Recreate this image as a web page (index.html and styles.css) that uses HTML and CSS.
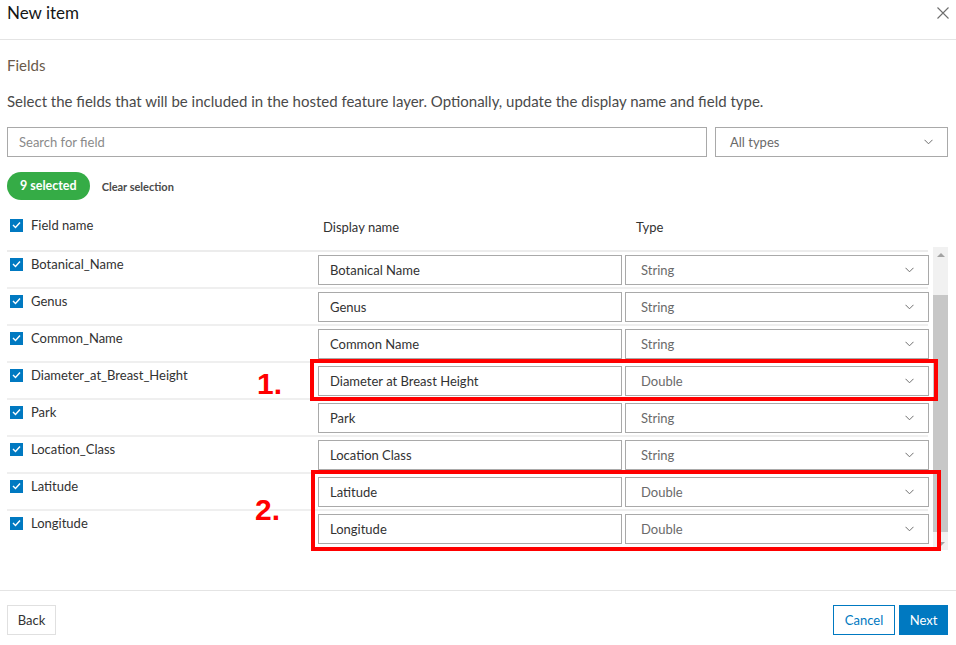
FILE: index.html
```html
<!DOCTYPE html>
<html lang="en">
<head>
<meta charset="utf-8">
<title>New item</title>
<link rel="stylesheet" href="styles.css">
</head>
<body>
<div class="dialog">
  <header class="dlg-header">
    <h1 class="dlg-title">New item</h1>
    <svg class="close" width="12" height="12" viewBox="0 0 12 12"><path d="M0.5 0.5L11.5 11.5M11.5 0.5L0.5 11.5" stroke="#6e6e6e" stroke-width="1.1" fill="none"/></svg>
  </header>
  <main class="dlg-body">
    <div class="section-label">Fields</div>
    <p class="intro">Select the fields that will be included in the hosted feature layer. Optionally, update the display name and field type.</p>
    <div class="filters">
      <div class="search">Search for field</div>
      <div class="select type-filter"><span>All types</span><svg class="chev" width="9" height="6" viewBox="0 0 9 6"><path d="M0.5 0.8L4.5 4.8L8.5 0.8" stroke="#6e6e6e" fill="none"/></svg></div>
    </div>
    <div class="selection">
      <span class="pill">9 selected</span>
      <span class="clear">Clear selection</span>
    </div>
    <div class="table-head">
      <div class="th th-field"><span class="cb"><svg width="9" height="8" viewBox="0 0 9 8"><path d="M1 4L3.5 6.5L8 1.5" stroke="#fff" stroke-width="1.4" fill="none"/></svg></span>Field name</div>
      <div class="th th-display">Display name</div>
      <div class="th th-type">Type</div>
    </div>
    <div class="table-wrap">
      <div class="rows">
        <div class="row"><div class="fname"><span class="cb"><svg width="9" height="8" viewBox="0 0 9 8"><path d="M1 4L3.5 6.5L8 1.5" stroke="#fff" stroke-width="1.4" fill="none"/></svg></span>Botanical_Name</div><div class="input">Botanical Name</div><div class="select"><span>String</span><svg class="chev" width="9" height="6" viewBox="0 0 9 6"><path d="M0.5 0.8L4.5 4.8L8.5 0.8" stroke="#6e6e6e" fill="none"/></svg></div></div>
        <div class="row"><div class="fname"><span class="cb"><svg width="9" height="8" viewBox="0 0 9 8"><path d="M1 4L3.5 6.5L8 1.5" stroke="#fff" stroke-width="1.4" fill="none"/></svg></span>Genus</div><div class="input">Genus</div><div class="select"><span>String</span><svg class="chev" width="9" height="6" viewBox="0 0 9 6"><path d="M0.5 0.8L4.5 4.8L8.5 0.8" stroke="#6e6e6e" fill="none"/></svg></div></div>
        <div class="row"><div class="fname"><span class="cb"><svg width="9" height="8" viewBox="0 0 9 8"><path d="M1 4L3.5 6.5L8 1.5" stroke="#fff" stroke-width="1.4" fill="none"/></svg></span>Common_Name</div><div class="input">Common Name</div><div class="select"><span>String</span><svg class="chev" width="9" height="6" viewBox="0 0 9 6"><path d="M0.5 0.8L4.5 4.8L8.5 0.8" stroke="#6e6e6e" fill="none"/></svg></div></div>
        <div class="row"><div class="fname"><span class="cb"><svg width="9" height="8" viewBox="0 0 9 8"><path d="M1 4L3.5 6.5L8 1.5" stroke="#fff" stroke-width="1.4" fill="none"/></svg></span>Diameter_at_Breast_Height</div><div class="input">Diameter at Breast Height</div><div class="select"><span>Double</span><svg class="chev" width="9" height="6" viewBox="0 0 9 6"><path d="M0.5 0.8L4.5 4.8L8.5 0.8" stroke="#6e6e6e" fill="none"/></svg></div></div>
        <div class="row"><div class="fname"><span class="cb"><svg width="9" height="8" viewBox="0 0 9 8"><path d="M1 4L3.5 6.5L8 1.5" stroke="#fff" stroke-width="1.4" fill="none"/></svg></span>Park</div><div class="input">Park</div><div class="select"><span>String</span><svg class="chev" width="9" height="6" viewBox="0 0 9 6"><path d="M0.5 0.8L4.5 4.8L8.5 0.8" stroke="#6e6e6e" fill="none"/></svg></div></div>
        <div class="row"><div class="fname"><span class="cb"><svg width="9" height="8" viewBox="0 0 9 8"><path d="M1 4L3.5 6.5L8 1.5" stroke="#fff" stroke-width="1.4" fill="none"/></svg></span>Location_Class</div><div class="input">Location Class</div><div class="select"><span>String</span><svg class="chev" width="9" height="6" viewBox="0 0 9 6"><path d="M0.5 0.8L4.5 4.8L8.5 0.8" stroke="#6e6e6e" fill="none"/></svg></div></div>
        <div class="row"><div class="fname"><span class="cb"><svg width="9" height="8" viewBox="0 0 9 8"><path d="M1 4L3.5 6.5L8 1.5" stroke="#fff" stroke-width="1.4" fill="none"/></svg></span>Latitude</div><div class="input">Latitude</div><div class="select"><span>Double</span><svg class="chev" width="9" height="6" viewBox="0 0 9 6"><path d="M0.5 0.8L4.5 4.8L8.5 0.8" stroke="#6e6e6e" fill="none"/></svg></div></div>
        <div class="row"><div class="fname"><span class="cb"><svg width="9" height="8" viewBox="0 0 9 8"><path d="M1 4L3.5 6.5L8 1.5" stroke="#fff" stroke-width="1.4" fill="none"/></svg></span>Longitude</div><div class="input">Longitude</div><div class="select"><span>Double</span><svg class="chev" width="9" height="6" viewBox="0 0 9 6"><path d="M0.5 0.8L4.5 4.8L8.5 0.8" stroke="#6e6e6e" fill="none"/></svg></div></div>
      </div>
      <div class="scrollbar">
        <span class="sb-arrow up"></span>
        <span class="sb-thumb"></span>
        <span class="sb-arrow down"></span>
      </div>
      <div class="mark mark1"></div>
      <div class="mark-num num1">1.</div>
      <div class="mark mark2"></div>
      <div class="mark-num num2">2.</div>
    </div>
  </main>
  <footer class="dlg-footer">
    <button class="btn btn-back">Back</button>
    <div class="btn-group">
      <button class="btn btn-cancel">Cancel</button>
      <button class="btn btn-next">Next</button>
    </div>
  </footer>
</div>
</body>
</html>
```

FILE: styles.css
```css
* { box-sizing: border-box; }
html, body { margin: 0; padding: 0; background: #fff; }
body {
  width: 956px;
  height: 645px;
  overflow: hidden;
  font-family: "Lato", "Open Sans", sans-serif;
  color: #323232;
}
.dialog { display: flex; flex-direction: column; height: 645px; }

.dlg-header {
  height: 40px;
  border-bottom: 1px solid #e4e4e4;
  display: flex;
  align-items: flex-start;
  justify-content: space-between;
  padding: 3px 7px 0 7px;
}
.dlg-title { margin: 0; font-size: 17px; line-height: 20px; font-weight: 400; color: #151515; }
.close { display: block; margin-top: 4px; }

.dlg-body { flex: 1; padding: 0 8px 0 7px; }
.section-label { margin-top: 16px; font-size: 15px; color: #6a5a4a; line-height: 18px; }
.intro { margin: 18px 0 0; font-size: 15px; line-height: 18px; color: #4a4a4a; }

.filters { display: flex; gap: 8px; margin-top: 17px; }
.search {
  flex: 0 0 700px;
  height: 30px;
  border: 1px solid #a9a9a9;
  padding: 0 11px;
  font-size: 13px;
  line-height: 28px;
  color: #8a8a8a;
}
.select {
  height: 30px;
  border: 1px solid #a9a9a9;
  display: flex;
  align-items: center;
  justify-content: space-between;
  padding: 0 14px 0 14px;
  font-size: 13px;
  color: #6a6a6a;
}
.type-filter { flex: 1; }
.chev { display: block; }

.selection { display: flex; align-items: center; gap: 12px; margin-top: 15px; }
.pill {
  background: #35ac46;
  color: #fff;
  font-weight: 700;
  font-size: 12.5px;
  height: 28px;
  line-height: 28px;
  padding: 0 13px;
  border-radius: 14px;
}
.clear { font-size: 11px; color: #4a4a4a; font-weight: 700; }

.table-head { display: grid; grid-template-columns: 311px 313px 1fr; margin-top: 17px; height: 29px; }
.th { font-size: 13px; color: #323232; }
.th-field { display: flex; align-items: center; padding-left: 3px; height: 16px; }
.th-display { padding: 2px 0 0 5px; }
.th-type { padding: 2px 0 0 5px; }

.cb {
  width: 13px;
  height: 13px;
  background: #0079c1;
  display: inline-flex;
  align-items: center;
  justify-content: center;
  margin-right: 8px;
  flex: none;
}

.table-wrap { position: relative; display: flex; height: 305px; margin-top: 0; border-top: 1px solid transparent; }
.rows { width: 921px; border-top: 2px solid #ececec; margin-top: 3px; }
.row {
  display: grid;
  grid-template-columns: 308px 304px 304px;
  column-gap: 3px;
  height: 37px;
  border-bottom: 2px solid #efefef;
  padding-top: 3px;
}
.row:last-child { border-bottom-color: transparent; }
.fname { display: flex; align-items: center; height: 20px; padding-left: 3px; margin-top: -1px; font-size: 13px; color: #323232; }
.input {
  height: 30px;
  border: 1px solid #a9a9a9;
  padding: 0 11px;
  font-size: 13px;
  line-height: 28px;
  color: #323232;
}
.row .select { padding: 0 14px 0 15px; }

.scrollbar {
  width: 15px;
  margin-left: 5px;
  background: #f1f1f1;
  display: flex;
  flex-direction: column;
  align-items: center;
  height: 303px;
}
.sb-arrow { width: 0; height: 0; border-left: 4px solid transparent; border-right: 4px solid transparent; }
.sb-arrow.up { border-bottom: 4px solid #a3a3a3; margin: 6px 0 0; }
.sb-arrow.down { border-top: 4px solid #a3a3a3; margin: 0 0 4px; }
.sb-thumb { width: 15px; background: #c7c7c7; margin: 38px 0 10px; flex: 1; }

.mark { position: absolute; border: 4px solid #ff0000; }
.mark1 { left: 303px; top: 112px; width: 628px; height: 42px; }
.mark2 { left: 304px; top: 223px; width: 630px; height: 81px; }
.mark-num { position: absolute; color: #ff0000; font-family: "Liberation Sans", Arial, sans-serif; font-weight: 700; font-size: 30px; line-height: 30px; }
.num1 { left: 250px; top: 122px; }
.num2 { left: 248px; top: 248px; }

.dlg-footer {
  border-top: 1px solid #e4e4e4;
  height: 55px;
  display: flex;
  justify-content: space-between;
  align-items: flex-start;
  padding: 14px 8px 0 7px;
  flex: none;
}
.btn-group { display: flex; gap: 4px; }
.btn {
  font-family: inherit;
  font-size: 13px;
  height: 30px;
  padding: 0 11px;
  border: 1px solid #e0e0e0;
  background: #fff;
  color: #323232;
  margin: 0;
}
.btn-back { width: 49px; padding: 0; }
.btn-cancel { border-color: #0079c1; color: #0079c1; width: 62px; padding: 0; }
.btn-next { background: #0079c1; border-color: #0079c1; color: #fff; width: 49px; padding: 0; }
```
